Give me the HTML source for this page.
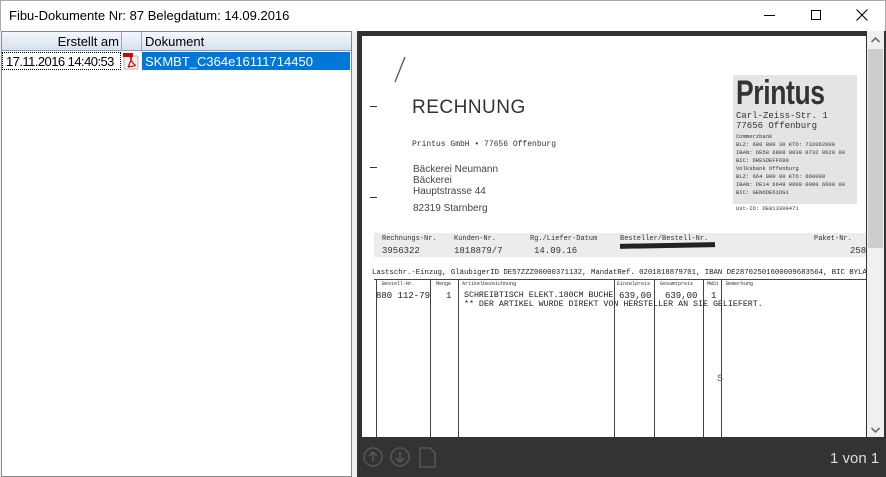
<!DOCTYPE html>
<html><head><meta charset="utf-8"><style>
*{margin:0;padding:0;box-sizing:border-box}
body{width:886px;height:477px;background:#f0f0f0;font-family:"Liberation Sans",sans-serif;position:relative;overflow:hidden}
.abs{position:absolute}
.mono{font-family:"Liberation Mono",monospace;color:#333}
</style></head><body>
<div class="abs" style="left:0;top:0;width:886px;height:31px;background:#fff;border-left:1px solid #aaa;border-right:1px solid #aaa;border-top:1px solid #aaa"></div>
<div class="abs" style="left:9px;top:8px;font-size:13px;color:#000">Fibu-Dokumente Nr: 87 Belegdatum: 14.09.2016</div>
<div class="abs" style="left:764px;top:15px;width:11px;height:1px;background:#000"></div>
<div class="abs" style="left:811px;top:10px;width:10px;height:10px;border:1px solid #000"></div>
<svg class="abs" style="left:856px;top:9px" width="12" height="12"><path d="M0.5 0.5L11.5 11.5M11.5 0.5L0.5 11.5" stroke="#000" stroke-width="1.1"/></svg>
<!-- left panel -->
<div class="abs" style="left:1px;top:31px;width:351px;height:446px;background:#fff;border:1px solid #828790"></div>
<div class="abs" style="left:2px;top:32px;width:349px;height:19px;background:linear-gradient(#f4f7fc,#d7e1ef);border-bottom:1px solid #8e9fb7"></div>
<div class="abs" style="left:121px;top:32px;width:1px;height:19px;background:#9aa9bf"></div>
<div class="abs" style="left:141px;top:32px;width:1px;height:19px;background:#9aa9bf"></div>
<div class="abs" style="left:2px;top:34px;width:117px;text-align:right;font-size:13px;color:#000">Erstellt am</div>
<div class="abs" style="left:145px;top:34px;font-size:13px;color:#000">Dokument</div>
<div class="abs" style="left:2px;top:52px;width:119px;height:18px;border:1px dotted #000;background:#fff"></div>
<div class="abs" style="left:6px;top:54px;font-size:13px;color:#000;letter-spacing:-0.55px;white-space:nowrap">17.11.2016 14:40:53</div>
<div class="abs" style="left:122px;top:52px;width:19px;height:18px;background:#fff"></div>
<svg class="abs" style="left:123px;top:53px" width="18" height="17"><rect x="1" y="3" width="14" height="13" fill="#eee" stroke="#bbb"/><rect x="0" y="0" width="10" height="4" fill="#d00"/><path d="M5 14C8 8 9 5 8 4C7 3 7 8 12 12C14 13 9 13 5 14" fill="none" stroke="#d00" stroke-width="1.2"/></svg>
<div class="abs" style="left:142px;top:52px;width:208px;height:18px;background:#0078d7"></div>
<div class="abs" style="left:145px;top:54px;font-size:13px;color:#fff">SKMBT_C364e16111714450</div>
<!-- right panel -->
<div class="abs" style="left:357px;top:31px;width:529px;height:446px;background:#333"></div>
<div class="abs" style="left:362px;top:36px;width:504px;height:401px;background:#fff;overflow:hidden">
  <svg class="abs" style="left:30px;top:20px" width="20" height="30"><path d="M13 1L3 26" stroke="#555" stroke-width="1.3"/></svg>
  <div class="abs" style="left:8px;top:70px;width:7px;height:1px;background:#333"></div>
  <div class="abs" style="left:8px;top:131px;width:7px;height:1px;background:#333"></div>
  <div class="abs" style="left:8px;top:161px;width:7px;height:1px;background:#333"></div>
  <div class="abs" style="left:50px;top:61px;font-size:19px;color:#333;letter-spacing:0.5px">RECHNUNG</div>
  <div class="abs mono" style="left:50px;top:104px;font-size:8px">Printus GmbH • 77656 Offenburg</div>
  <div class="abs" style="left:51px;top:128px;font-size:10px;color:#444;line-height:11px">Bäckerei Neumann<br>Bäckerei<br>Hauptstrasse 44</div>
  <div class="abs" style="left:51px;top:167px;font-size:10px;color:#444">82319 Starnberg</div>
  <div class="abs" style="left:371px;top:39px;width:124px;height:129px;background:#e4e4e4"></div>
  <div class="abs" style="left:374px;top:38px;font-size:34px;font-weight:bold;color:#333;transform:scaleX(0.78);transform-origin:left;letter-spacing:-0.5px">Printus</div>
  <div class="abs mono" style="left:374px;top:75px;font-size:9px;line-height:10px">Carl-Zeiss-Str. 1<br>77656 Offenburg</div>
  <div class="abs mono" style="left:374px;top:97px;font-size:5.5px;line-height:8px">Commerzbank<br>BLZ: 680 800 30 KTO: 732062000<br>IBAN: DE58 6808 0030 0732 0620 00<br>BIC: DRESDEFF680</div>
  <div class="abs mono" style="left:374px;top:129px;font-size:5.5px;line-height:8px">Volksbank Offenburg<br>BLZ: 664 900 00 KTO: 660000<br>IBAN: DE14 6649 0000 0000 6600 00<br>BIC: GENODE61OG1<br><br>Ust-ID: DE813309471</div>
  <div class="abs" style="left:12px;top:197px;width:492px;height:24px;background:#ececec"></div>
  <div class="abs mono" style="left:20px;top:199px;font-size:7px">Rechnungs-Nr.</div>
  <div class="abs mono" style="left:92px;top:199px;font-size:7px">Kunden-Nr.</div>
  <div class="abs mono" style="left:168px;top:199px;font-size:7px">Rg./Liefer-Datum</div>
  <div class="abs mono" style="left:258px;top:199px;font-size:7px">Besteller/Bestell-Nr.</div>
  <div class="abs mono" style="left:452px;top:199px;font-size:7px">Paket-Nr.</div>
  <div class="abs" style="left:258px;top:207px;width:95px;height:5px;background:#222;transform:rotate(-1deg)"></div>
  <div class="abs mono" style="left:20px;top:210px;font-size:9px">3956322</div>
  <div class="abs mono" style="left:92px;top:210px;font-size:9px">1818879/7</div>
  <div class="abs mono" style="left:172px;top:210px;font-size:9px">14.09.16</div>
  <div class="abs mono" style="left:488px;top:210px;font-size:9px">2584</div>
  <div class="abs mono" style="left:10px;top:233px;font-size:7.3px;white-space:nowrap;color:#222">Lastschr.-Einzug, GläubigerID DE57ZZZ00000371132, MandatRef. 0201818879701, IBAN DE28702501600009683564, BIC BYLADEM1K</div>
  <div class="abs" style="left:12px;top:243px;width:492px;height:1px;background:#444"></div>
  <div class="abs" style="left:14px;top:243px;width:1px;height:160px;background:#444"></div>
  <div class="abs" style="left:68px;top:243px;width:1px;height:160px;background:#444"></div>
  <div class="abs" style="left:96px;top:243px;width:1px;height:160px;background:#444"></div>
  <div class="abs" style="left:252px;top:243px;width:1px;height:160px;background:#444"></div>
  <div class="abs" style="left:292px;top:243px;width:1px;height:160px;background:#444"></div>
  <div class="abs" style="left:341px;top:243px;width:1px;height:160px;background:#444"></div>
  <div class="abs" style="left:359px;top:243px;width:1px;height:160px;background:#444"></div>
  <div class="abs mono" style="left:20px;top:245px;font-size:5px">Bestell-Nr.</div>
  <div class="abs mono" style="left:74px;top:245px;font-size:5px">Menge</div>
  <div class="abs mono" style="left:100px;top:245px;font-size:5px">Artikelbezeichnung</div>
  <div class="abs mono" style="left:255px;top:245px;font-size:5px">Einzelpreis</div>
  <div class="abs mono" style="left:298px;top:245px;font-size:5px">Gesamtpreis</div>
  <div class="abs mono" style="left:345px;top:245px;font-size:5px">MWSt</div>
  <div class="abs mono" style="left:364px;top:245px;font-size:5px">Bemerkung</div>
  <div class="abs mono" style="left:14px;top:255px;font-size:9px;color:#222">880 112-79</div>
  <div class="abs mono" style="left:84px;top:255px;font-size:9px;color:#222">1</div>
  <div class="abs mono" style="left:102px;top:255px;font-size:8.3px;color:#222;white-space:nowrap">SCHREIBTISCH ELEKT.180CM BUCHE</div>
  <div class="abs mono" style="left:102px;top:264px;font-size:8.3px;color:#222;white-space:nowrap">** DER ARTIKEL WURDE DIREKT VON HERSTELLER AN SIE GELIEFERT.</div>
  <div class="abs mono" style="left:257px;top:255px;font-size:9px;color:#222">639,00</div>
  <div class="abs mono" style="left:303px;top:255px;font-size:9px;color:#222">639,00</div>
  <div class="abs mono" style="left:349px;top:255px;font-size:9px;color:#222">1</div>
  <div class="abs mono" style="left:355px;top:338px;font-size:10px;color:#555">S</div>
</div>
<!-- scrollbar -->
<div class="abs" style="left:867px;top:31px;width:17px;height:406px;background:#f0f0f0"></div>
<div class="abs" style="left:868px;top:49px;width:15px;height:199px;background:#cdcdcd"></div>
<svg class="abs" style="left:870px;top:36px" width="11" height="8"><path d="M1.5 6L5.5 2L9.5 6" fill="none" stroke="#606060" stroke-width="1.5"/></svg>
<svg class="abs" style="left:870px;top:426px" width="11" height="8"><path d="M1.5 2L5.5 6L9.5 2" fill="none" stroke="#606060" stroke-width="1.5"/></svg>
<div class="abs" style="left:357px;top:437px;width:529px;height:40px;background:#333"></div>
<svg class="abs" style="left:363px;top:446px" width="80" height="24"><g fill="none" stroke="#555" stroke-width="1.6"><circle cx="10" cy="11" r="9"/><path d="M10 16V6M6 10L10 6L14 10"/><circle cx="37" cy="11" r="9"/><path d="M37 6V16M33 12L37 16L41 12"/><path d="M57 2H67L72 7V21H57Z"/></g></svg>
<div class="abs" style="left:830px;top:450px;font-size:15px;color:#ddd">1 von 1</div>
</body></html>
